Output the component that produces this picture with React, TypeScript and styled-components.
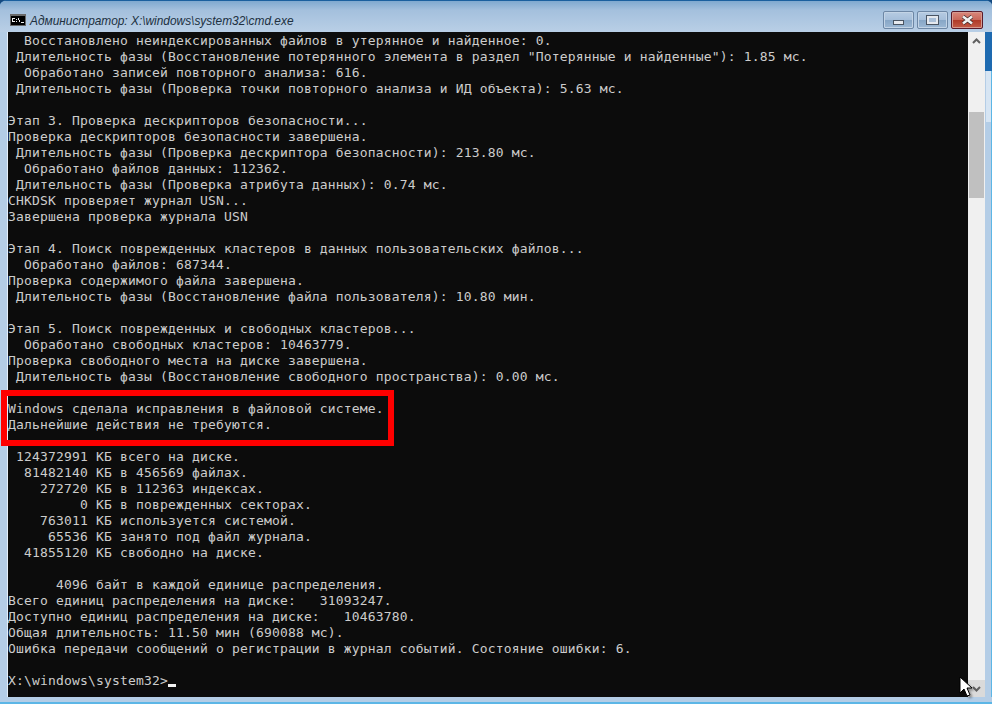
import { FC } from 'react';
import styled, { createGlobalStyle } from 'styled-components';

const LINES = [
  '  Восстановлено неиндексированных файлов в утерянное и найденное: 0.',
  ' Длительность фазы (Восстановление потерянного элемента в раздел "Потерянные и найденные"): 1.85 мс.',
  '  Обработано записей повторного анализа: 616.',
  ' Длительность фазы (Проверка точки повторного анализа и ИД объекта): 5.63 мс.',
  '',
  'Этап 3. Проверка дескрипторов безопасности...',
  'Проверка дескрипторов безопасности завершена.',
  ' Длительность фазы (Проверка дескриптора безопасности): 213.80 мс.',
  '  Обработано файлов данных: 112362.',
  ' Длительность фазы (Проверка атрибута данных): 0.74 мс.',
  'CHKDSK проверяет журнал USN...',
  'Завершена проверка журнала USN',
  '',
  'Этап 4. Поиск поврежденных кластеров в данных пользовательских файлов...',
  '  Обработано файлов: 687344.',
  'Проверка содержимого файла завершена.',
  ' Длительность фазы (Восстановление файла пользователя): 10.80 мин.',
  '',
  'Этап 5. Поиск поврежденных и свободных кластеров...',
  '  Обработано свободных кластеров: 10463779.',
  'Проверка свободного места на диске завершена.',
  ' Длительность фазы (Восстановление свободного пространства): 0.00 мс.',
  '',
  'Windows сделала исправления в файловой системе.',
  'Дальнейшие действия не требуются.',
  '',
  ' 124372991 КБ всего на диске.',
  '  81482140 КБ в 456569 файлах.',
  '    272720 КБ в 112363 индексах.',
  '         0 КБ в поврежденных секторах.',
  '    763011 КБ используется системой.',
  '     65536 КБ занято под файл журнала.',
  '  41855120 КБ свободно на диске.',
  '',
  '      4096 байт в каждой единице распределения.',
  'Всего единиц распределения на диске:   31093247.',
  'Доступно единиц распределения на диске:   10463780.',
  'Общая длительность: 11.50 мин (690088 мс).',
  'Ошибка передачи сообщений о регистрации в журнал событий. Состояние ошибки: 6.',
  '',
];

const GlobalStyle = createGlobalStyle`
  html, body {
    margin: 0;
    padding: 0;
    background: #14497f;
    overflow: hidden;
  }
`;

const Window = styled.div`
  position: relative;
  display: flex;
  flex-direction: column;
  width: 992px;
  height: 704px;
  box-sizing: border-box;
  overflow: hidden;
  border-radius: 6px 6px 0 0;
  border-top: 1px solid #1a5f9e;
  border-bottom: 2px solid #5cb6e6;
  background: #b4cde6;
`;

const TitleBar = styled.div`
  display: flex;
  align-items: flex-start;
  height: 31px;
  padding: 0 9px 0 10px;
  flex-shrink: 0;
  background: linear-gradient(180deg, #7fa9cf 0%, #a4c0dd 30%, #b9cfe6 100%);
`;

const TitleIcon = styled.svg`
  width: 16px;
  height: 12px;
  margin-top: 13px;
  flex-shrink: 0;
`;

const Title = styled.span`
  margin: 12px 0 0 4px;
  font-family: 'Liberation Sans', sans-serif;
  font-size: 11.9px;
  font-style: italic;
  line-height: 16px;
  color: #20303f;
  white-space: nowrap;
`;

const Controls = styled.div`
  display: flex;
  gap: 3px;
  margin: 10px 0 0 auto;
`;

const ControlButton = styled.div<{ $close?: boolean }>`
  display: flex;
  align-items: center;
  justify-content: center;
  box-sizing: border-box;
  width: ${({ $close }) => ($close ? '32px' : '31px')};
  height: 18px;
  border-radius: 2px;
  border: 1px solid ${({ $close }) => ($close ? '#5a1a2a' : '#6d87a5')};
  box-shadow: inset 0 0 0 1px ${({ $close }) => ($close ? '#d69a90' : '#c3d4e6')};
  background: ${({ $close }) =>
    $close
      ? 'linear-gradient(180deg, #d9887c 0%, #c9685a 48%, #b03a28 52%, #c45c48 100%)'
      : 'linear-gradient(180deg, #b6cbe2 0%, #a6bfda 48%, #87a6c6 52%, #9cb8d4 100%)'};
`;

const MinimizeGlyph = styled.div`
  width: 9px;
  height: 3px;
  margin-top: 4px;
  background: #e6e9ee;
  border: 1px solid #4a5563;
`;

const MaximizeGlyph = styled.div`
  width: 7px;
  height: 4px;
  background: #a9bfd8;
  border: 2px solid #e4e8ee;
  outline: 1px solid #4a5563;
`;

const Body = styled.div`
  display: flex;
  flex: 1;
  min-height: 0;
  padding: 0 0 5px 8px;
`;

const Terminal = styled.pre`
  flex: 1;
  min-width: 0;
  margin: 0;
  padding-top: 1px;
  overflow: hidden;
  background: #0c0c0c;
  box-shadow: -1px 0 0 #e4eef8;
  color: #cccccc;
  font-family: 'DejaVu Sans Mono', monospace;
  font-size: 13px;
  letter-spacing: 0.17px;
  line-height: 16px;
`;

const Line = styled.div`
  height: 16px;
`;

const Caret = styled.span`
  display: inline-block;
  width: 8px;
  height: 3px;
  background: #f2f2f2;
  vertical-align: -2px;
`;

const Scrollbar = styled.div`
  display: flex;
  flex-direction: column;
  width: 17px;
  flex-shrink: 0;
  background: #f0f0f0;
`;

const ScrollButton = styled.div<{ $hover?: boolean }>`
  display: flex;
  align-items: center;
  justify-content: center;
  height: 17px;
  flex-shrink: 0;
  background: ${({ $hover }) => ($hover ? '#dadada' : 'transparent')};
`;

const Thumb = styled.div`
  width: 15px;
  height: 86px;
  margin: 63px 0 0 1px;
  background: #c0c0c0;
`;

const Spacer = styled.div`
  flex: 1;
`;

const RightFrame = styled.div`
  display: flex;
  flex-direction: column;
  width: 7px;
  flex-shrink: 0;
  box-sizing: border-box;
  border-right: 1px solid #5cb6e6;
`;

const FrameDesktop = styled.div`
  height: 39px;
  margin-right: -1px;
  background: #1e6ab0;
`;

const FrameGlow = styled.div`
  height: 51px;
  margin-left: 1px;
  background: #d7e5f3;
`;

const Highlight = styled.div`
  position: absolute;
  left: 1px;
  top: 389px;
  width: 393px;
  height: 56px;
  box-sizing: border-box;
  border: 6px solid #ff0000;
`;

const Pointer = styled.svg`
  position: absolute;
  left: 959px;
  top: 675px;
  width: 16px;
  height: 24px;
  filter: drop-shadow(2px 2px 1px rgba(0, 0, 0, 0.35));
`;

const Chevron: FC<{ up?: boolean }> = ({ up }) => (
  <svg width="9" height="6" viewBox="0 0 9 6">
    <path d={up ? 'M1 5 L4.5 1.5 L8 5' : 'M1 1 L4.5 4.5 L8 1'} fill="none" stroke="#606060" strokeWidth="2" />
  </svg>
);

const App: FC = () => (
  <>
    <GlobalStyle />
    <Window>
      <TitleBar>
        <TitleIcon viewBox="0 0 16 12">
          <rect width="16" height="12" fill="#6a6a6a" />
          <rect x="1" y="2" width="14" height="9" fill="#000" />
          <path d="M2 4h3v1H3v2h2v1H2z M6 5h1v1H6z M6 7h1v1H6z M8 4h1v2H8z M9 6h1v2H9z M11 8h3v1h-3z" fill="#f0f0f0" />
        </TitleIcon>
        <Title>Администратор: X:\windows\system32\cmd.exe</Title>
        <Controls>
          <ControlButton>
            <MinimizeGlyph />
          </ControlButton>
          <ControlButton>
            <MaximizeGlyph />
          </ControlButton>
          <ControlButton $close>
            <svg width="13" height="10" viewBox="0 0 13 10">
              <path d="M2 1.5 L11 8.5 M11 1.5 L2 8.5" stroke="#3d2a2a" strokeWidth="4" />
              <path d="M2 1.5 L11 8.5 M11 1.5 L2 8.5" stroke="#f1f1f1" strokeWidth="2.6" />
            </svg>
          </ControlButton>
        </Controls>
      </TitleBar>
      <Body>
        <Terminal>
          {LINES.map((line, i) => (
            <Line key={i}>{line}</Line>
          ))}
          <Line>
            X:\windows\system32&gt;
            <Caret />
          </Line>
        </Terminal>
        <Scrollbar>
          <ScrollButton>
            <Chevron up />
          </ScrollButton>
          <Thumb />
          <Spacer />
          <ScrollButton $hover>
            <Chevron />
          </ScrollButton>
        </Scrollbar>
        <RightFrame>
          <FrameDesktop />
          <FrameGlow />
        </RightFrame>
      </Body>
      <Highlight />
      <Pointer viewBox="0 0 16 24">
        <path d="M1 1 L1 17 L5 13 L8 20 L11 19 L8 12 L13 12 Z" fill="#fff" stroke="#000" strokeWidth="1" />
      </Pointer>
    </Window>
  </>
);

export default App;
